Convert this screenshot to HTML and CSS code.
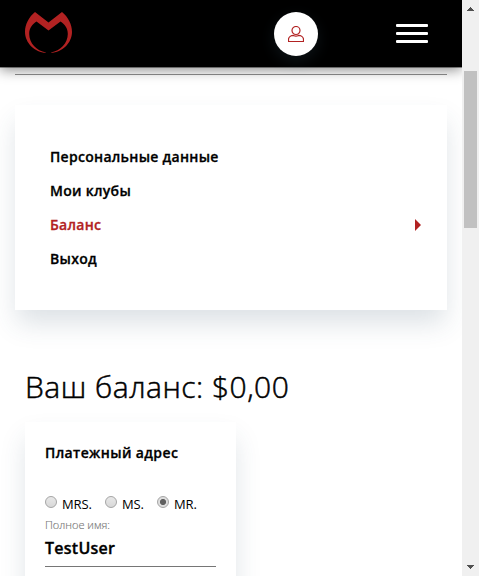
FILE: index.html
```html
<!DOCTYPE html>
<html lang="ru">
<head>
<meta charset="utf-8">
<title>Баланс</title>
<link rel="stylesheet" href="styles.css">
</head>
<body>
<div class="page">
  <header class="header">
    <svg class="logo" viewBox="0 0 47 42" width="47" height="42"><path fill="#b22222" d="M10 0L23.500 10.500L37 0C43 5 47 12 47 20C47 31 37 40.500 26 40.800V40.400C35.500 39 42.800 31 42.800 22C42.800 16 39.500 12 35.500 9.500L23.500 18.500L11.500 9.500C7.500 12 4.200 16 4.200 22C4.200 31 11.500 39 21 40.400V40.800C10 40.500 0 31 0 20C0 12 4 5 10 0Z"/></svg>
    <a class="user"><svg viewBox="0 0 16 16" width="16" height="16" fill="none" stroke="#b22222" stroke-width="1.200"><circle cx="8" cy="4.500" r="4"/><path d="M.5 15.500V13.500C.5 10.800 3.200 9.400 5.600 9.400C7 10.200 9 10.200 10.400 9.400C12.800 9.400 15.500 10.800 15.500 13.500V15.500Z"/></svg></a>
    <div class="burger"><i></i><i></i><i></i></div>
  </header>
  <main class="content">
    <hr class="rule">
    <nav class="card menu">
      <a>Персональные данные</a>
      <a>Мои клубы</a>
      <a class="active">Баланс<span class="arrow"></span></a>
      <a>Выход</a>
    </nav>
    <h1>Ваш баланс: $0,00</h1>
    <section class="card address">
      <h2>Платежный адрес</h2>
      <div class="titles">
        <label class="mrs"><span class="radio"></span>MRS.</label>
        <label class="ms"><span class="radio"></span>MS.</label>
        <label><span class="radio checked"></span>MR.</label>
      </div>
      <div class="caption">Полное имя:</div>
      <div class="field">TestUser</div>
    </section>
  </main>
</div>
<div class="scrollbar">
  <svg width="7" height="4" shape-rendering="crispEdges" fill="#505050"><path d="M3 0h1v1h1v1h1v1h1v1H0V3h1V2h1V1h1Z"/></svg>
  <div class="thumb"></div>
  <svg class="down" width="7" height="4" shape-rendering="crispEdges" fill="#505050"><path d="M0 0h7v1H6v1H5v1H4v1H3V3H2V2H1V1H0Z"/></svg>
</div>
</body>
</html>
```
FILE: styles.css
```css
* { box-sizing: border-box; }
body {
  margin: 0;
  display: flex;
  height: 576px;
  overflow: hidden;
  background: #fff;
  color: #000;
  font-family: "Open Sans", "Noto Sans", sans-serif;
}
.page { width: 462px; height: 576px; overflow: hidden; }
.header {
  position: relative;
  z-index: 2;
  display: flex;
  height: 67px;
  padding: 12px 34px 0 25px;
  background: #000;
  box-shadow: 0 1px 0 rgba(0, 0, 0, .4), 0 3px 12px rgba(0, 0, 0, .45);
}
.user {
  display: flex;
  align-items: center;
  justify-content: center;
  width: 44px;
  height: 44px;
  margin-left: 202px;
  border-radius: 50%;
  background: #fff;
  box-shadow: 0 5px 15px rgba(66, 100, 120, .2);
}
.burger {
  display: flex;
  flex-direction: column;
  gap: 5px;
  width: 32px;
  margin: 12px 0 0 auto;
}
.burger i { height: 3px; border-radius: 1px; background: #fff; }
.content { padding: 7px 15px 0; }
.rule { margin: 0; border: 0; height: 1px; background: #909090; }
.card {
  background: #fff;
  box-shadow: 0 15px 25px -2px rgba(50, 80, 100, .17);
}
.menu {
  height: 205px;
  margin-top: 30px;
  padding: 34px 26px 0 35px;
}
.menu a {
  display: flex;
  align-items: center;
  justify-content: space-between;
  height: 34px;
  font-size: 14px;
  font-weight: 600;
  letter-spacing: .29px;
  -webkit-text-stroke: .3px;
}
.menu .active { color: #b22222; }
.arrow {
  position: relative;
  top: 1px;
  border: 6px solid transparent;
  border-left-color: #b22222;
  border-right: 0;
}
h1 {
  margin: 56px 0 0 10px;
  font-size: 30px;
  line-height: 42px;
  font-weight: 300;
  letter-spacing: .5px;
  -webkit-text-stroke: .5px;
  white-space: nowrap;
}
.address {
  width: 211px;
  height: 300px;
  margin: 14px 0 0 10px;
  padding: 21px 20px 0;
}
h2 {
  margin: 0;
  font-size: 14px;
  line-height: 20px;
  font-weight: 600;
  letter-spacing: .38px;
  -webkit-text-stroke: .3px;
}
.titles { display: flex; height: 20px; margin-top: 31px; font-size: 13px; line-height: 20px; letter-spacing: -.1px; }
label { display: flex; }
.mrs { width: 60px; }
.ms { width: 52px; }
.radio {
  width: 12px;
  height: 12px;
  margin: 2px 5px 0 0;
  border: 1px solid #a5a5a5;
  border-radius: 50%;
  background: linear-gradient(#e8e8e8, #d8d8d8);
}
.checked { background: radial-gradient(circle, #606060 0 2.700px, #dedede 3.400px); }
.caption { margin-top: 3px; font-size: 11px; line-height: 16px; font-weight: 300; color: #777; -webkit-text-stroke: .15px; }
.field {
  height: 34px;
  border-bottom: 1px solid #767676;
  font-size: 16px;
  line-height: 31px;
  font-weight: 600;
  letter-spacing: .25px;
  -webkit-text-stroke: .35px;
}
.scrollbar {
  display: flex;
  flex-direction: column;
  align-items: center;
  width: 17px;
  height: 576px;
  padding: 7px 0;
  background: #f0f0f0;
}
.thumb { width: 13px; height: 157px; margin-top: 60px; background: #c1c1c1; }
.down { margin-top: auto; }
```
